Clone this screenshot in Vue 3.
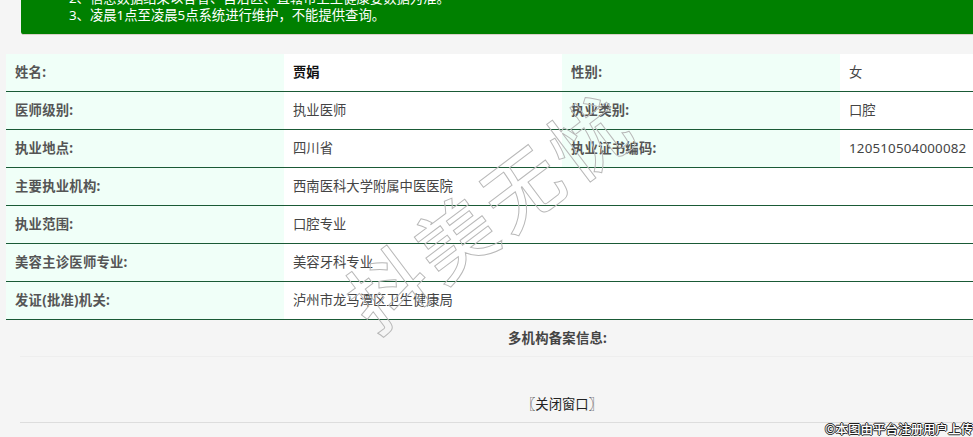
<template>
  <div class="page">
    <div class="banner">
      <p>2、信息数据结果以各省、自治区、直辖市卫生健康委数据为准。</p>
      <p>3、凌晨1点至凌晨5点系统进行维护，不能提供查询。</p>
    </div>
    <table class="info">
      <tbody>
        <tr>
          <th>姓名:</th><td class="name">贾娟</td>
          <th>性别:</th><td>女</td>
        </tr>
        <tr>
          <th>医师级别:</th><td>执业医师</td>
          <th>执业类别:</th><td>口腔</td>
        </tr>
        <tr>
          <th>执业地点:</th><td>四川省</td>
          <th>执业证书编码:</th><td class="code">120510504000082</td>
        </tr>
        <tr v-for="row in wideRows" :key="row[0]">
          <th>{{ row[0] }}</th><td colspan="3">{{ row[1] }}</td>
        </tr>
      </tbody>
    </table>
    <div class="multi">多机构备案信息:</div>
    <div class="close"><a>〖关闭窗口〗</a></div>
    <div class="mark" aria-hidden="true">抖美无忧</div>
    <div class="credit">©本图由平台注册用户上传</div>
  </div>
</template>

<script setup>
const wideRows = [
  ['主要执业机构:', '西南医科大学附属中医医院'],
  ['执业范围:', '口腔专业'],
  ['美容主诊医师专业:', '美容牙科专业'],
  ['发证(批准)机关:', '泸州市龙马潭区卫生健康局'],
]
</script>

<style>
html, body { margin: 0; background: #f5f5f5; overflow: hidden; }
</style>

<style scoped>
.page {
  position: relative;
  width: 973px;
  height: 437px;
  overflow: hidden;
  background: #f5f5f5;
  font-family: "Noto Sans", "Noto Sans CJK SC", sans-serif;
  font-size: 13.33px;
  color: #444;
}
.banner {
  box-sizing: border-box;
  height: 51px;
  margin: -16px 0 19px 21px;
  width: 980px;
  padding: 6px 0 0 48px;
  background: #008000;
  border-radius: 3px;
  border-bottom: 1px solid #d9d0c8;
  color: #fff;
  line-height: 17px;
  font-size: 13.33px;
}
.banner p { margin: 0; }
.info {
  border-collapse: separate;
  border-spacing: 0;
  table-layout: fixed;
  width: 1112px;
  margin-left: 6px;
  background: #fff;
}
.info tr { height: 38px; }
.info th, .info td {
  box-sizing: border-box;
  width: 278px;
  padding: 0 9px 2px;
  text-align: left;
  font-size: 13.33px;
  line-height: 18px;
  border-bottom: 1px solid #1a5a36;
}
.info th { background: #f0fff8; font-weight: 700; color: #555; letter-spacing: 0.25px; }
.info td.name { font-weight: 700; color: #111; }
.info td.code { letter-spacing: 0.2px; }
.multi {
  box-sizing: border-box;
  margin-left: 20px;
  height: 37px;
  padding: 9px 0 0 488px;
  line-height: 18px;
  font-weight: 700;
  letter-spacing: 0.25px;
  color: #444;
  border-bottom: 1px solid #eee;
}
.close {
  box-sizing: border-box;
  margin-left: 20px;
  height: 66px;
  padding: 38px 0 0 502px;
  line-height: 18px;
  color: #222;
  border-bottom: 1px solid #ddd;
}
.mark {
  position: absolute;
  left: 320px;
  top: 167px;
  width: 340px;
  font-family: "Noto Sans CJK SC", sans-serif;
  font-size: 78px;
  font-weight: 500;
  line-height: 80px;
  letter-spacing: 6px;
  white-space: nowrap;
  color: transparent;
  -webkit-text-stroke: 1px #b8b8b8;
  transform: rotate(-37deg);
}
.credit {
  position: absolute;
  right: 0;
  bottom: 0;
  font-family: "Noto Sans CJK SC", sans-serif;
  font-size: 12.5px;
  font-weight: 500;
  line-height: 16px;
  color: #fff;
  text-shadow: 1px 0 0 #222, -1px 0 0 #222, 0 1px 0 #222, 0 -1px 0 #222;
}
</style>
